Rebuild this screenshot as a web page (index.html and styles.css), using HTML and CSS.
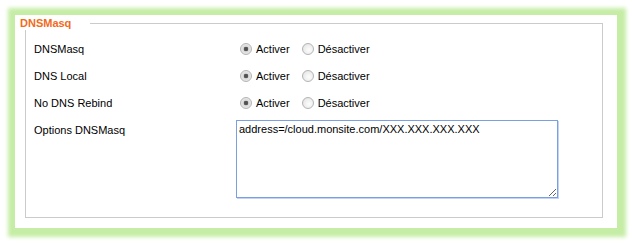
FILE: index.html
```html
<!DOCTYPE html>
<html lang="fr">
<head>
  <meta charset="UTF-8" />
  <title>DNSMasq</title>
  <link rel="stylesheet" href="styles.css">
</head>
<body>
  <div class="panel">
    <fieldset class="group">
      <legend>DNSMasq</legend>

      <div class="row">
        <span class="label">DNSMasq</span>
        <div class="choices">
          <label><input type="radio" name="dnsmasq" checked> Activer</label>
          <label><input type="radio" name="dnsmasq"> Désactiver</label>
        </div>
      </div>

      <div class="row">
        <span class="label">DNS Local</span>
        <div class="choices">
          <label><input type="radio" name="dnslocal" checked> Activer</label>
          <label><input type="radio" name="dnslocal"> Désactiver</label>
        </div>
      </div>

      <div class="row">
        <span class="label">No DNS Rebind</span>
        <div class="choices">
          <label><input type="radio" name="rebind" checked> Activer</label>
          <label><input type="radio" name="rebind"> Désactiver</label>
        </div>
      </div>

      <div class="row row-text">
        <span class="label">Options DNSMasq</span>
        <textarea class="options" spellcheck="false">address=/cloud.monsite.com/XXX.XXX.XXX.XXX</textarea>
      </div>
    </fieldset>
  </div>
</body>
</html>
```

FILE: styles.css
```css
body {
  margin: 0;
  background: #fff;
  font-family: 'Liberation Sans', Arial, sans-serif;
  font-size: 11px;
  color: #000;
}

.panel {
  margin: 15px;
  width: 602px;
  height: 213px;
  box-sizing: border-box;
  padding: 1px 14px 10px 10px;
  background: #fff;
  box-shadow: 1px 1px 4px 8px #c6eda6;
}

.group {
  margin: 0;
  height: 100%;
  box-sizing: border-box;
  border: 1px solid #cbcbcb;
  padding: 5px 0 0 8px;
}

.group legend {
  margin-left: -16px;
  padding: 0 19px 0 2px;
  background: #fff;
  color: #f26a1b;
  font-weight: bold;
  font-size: 11px;
  line-height: 14px;
}

.row {
  display: grid;
  grid-template-columns: 202px 1fr;
  align-items: center;
  height: 27px;
}

.row-text {
  align-items: start;
  height: auto;
  margin-top: 4px;
}

.row-text .label {
  margin-top: 4px;
}

.choices {
  display: flex;
  gap: 12px;
  margin-left: 4px;
}

.choices label {
  display: flex;
  align-items: center;
  gap: 4px;
}

input[type="radio"] {
  appearance: none;
  margin: 0;
  width: 12px;
  height: 12px;
  border-radius: 50%;
  border: 1px solid #b4b4b4;
  background: radial-gradient(circle at 60% 60%, #fdfdfd 0%, #ececec 60%, #d6d6d6 100%);
  box-sizing: border-box;
}

input[type="radio"]:checked {
  background: radial-gradient(circle, #4c4c4c 0, #5a5a5a 2px, #d8d8d8 2.6px, #f6f6f6 100%);
}

.options {
  width: 322px;
  height: 78px;
  box-sizing: border-box;
  margin: 0;
  padding: 2px;
  border: 1px solid #7b9fe0;
  box-shadow: 1px 1px 0 #c2d4f2;
  font-family: 'Liberation Sans', Arial, sans-serif;
  font-size: 11px;
  color: #000;
  resize: both;
  outline: none;
}
```
